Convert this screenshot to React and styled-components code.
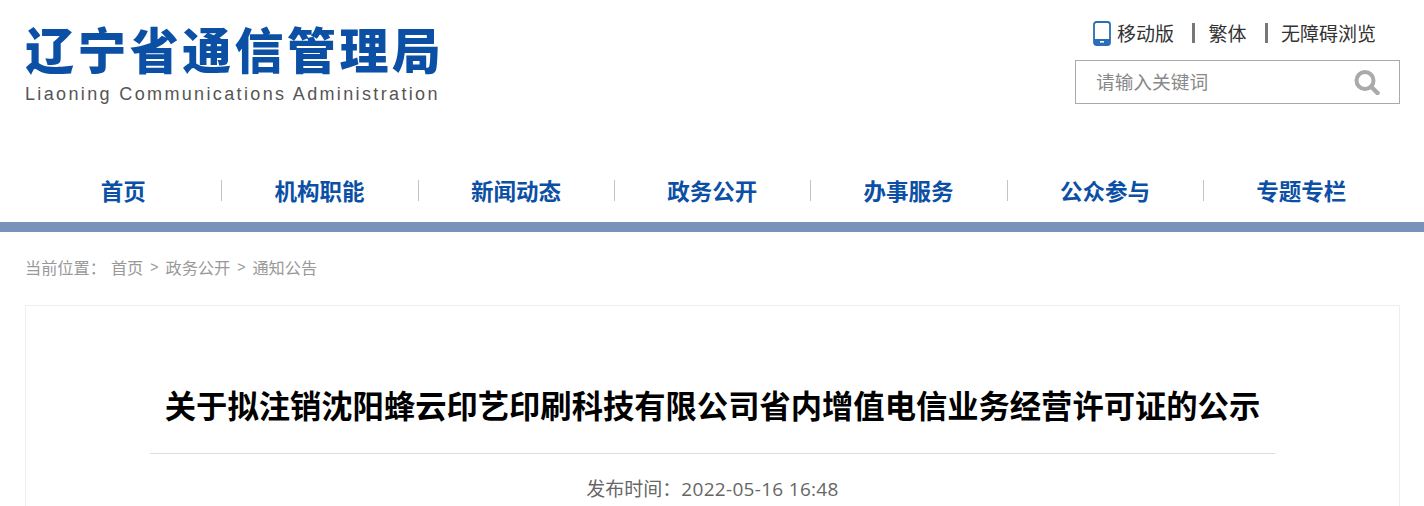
import React from 'react';
import styled, { createGlobalStyle } from 'styled-components';

const cjk = '"Noto Sans CJK SC", "Noto Sans", sans-serif';

const GlobalStyle = createGlobalStyle`
  html, body {
    margin: 0;
    padding: 0;
    height: 100%;
    overflow: hidden;
    background: #fff;
    font-family: ${cjk};
  }
`;

const Header = styled.header`
  display: flex;
  justify-content: space-between;
  align-items: flex-start;
  height: 170px;
  padding: 0 24px 0 25px;
`;

const Logo = styled.div`
  display: flex;
  flex-direction: column;
  padding-top: 18px;
`;

const LogoTitle = styled.div`
  font-size: 49px;
  line-height: 60px;
  letter-spacing: 3.4px;
  font-weight: 900;
  color: #0b50a5;
  white-space: nowrap;
`;

const LogoSub = styled.div`
  margin-top: 6px;
  font-family: "Liberation Sans", Arial, sans-serif;
  font-size: 18px;
  line-height: 20px;
  letter-spacing: 2.36px;
  color: #555;
  white-space: nowrap;
`;

const Tools = styled.div`
  display: flex;
  flex-direction: column;
  align-items: flex-end;
  padding-top: 19px;
`;

const ToolLinks = styled.div`
  display: flex;
  align-items: center;
  height: 28px;
  padding-right: 24px;
`;

const ToolLink = styled.a`
  display: flex;
  align-items: center;
  gap: 6px;
  font-size: 19px;
  line-height: 28px;
  color: #333;
  white-space: nowrap;
`;

const ToolSep = styled.span`
  width: 3px;
  height: 20px;
  margin: 0 13px 0 18.5px;
  background: #777;
`;

const SearchBox = styled.div`
  display: flex;
  align-items: center;
  justify-content: space-between;
  box-sizing: border-box;
  width: 325px;
  height: 44px;
  margin-top: 13px;
  padding: 0 19px 0 20px;
  border: 1px solid #aaa;
`;

const SearchInput = styled.input`
  flex: 1;
  min-width: 0;
  border: 0;
  outline: 0;
  padding: 0 0 3px;
  background: transparent;
  font-family: ${cjk};
  font-size: 18.7px;
  color: #333;

  &::placeholder {
    color: #888;
    opacity: 1;
  }
`;

const Nav = styled.nav`
  display: grid;
  grid-template-columns: repeat(7, 1fr);
  align-items: center;
  box-sizing: border-box;
  height: 52px;
  margin: 0 23.5px 0 26px;
  padding-bottom: 12px;
`;

const NavItem = styled.a`
  display: block;
  box-sizing: border-box;
  height: 21px;
  padding-right: 1px;
  line-height: 21px;
  text-align: center;
  font-size: 22.5px;
  font-weight: 700;
  color: #0b50a5;
  white-space: nowrap;
  border-right: 1px solid ${({ $last }) => ($last ? 'transparent' : '#c4c4c4')};
`;

const Bar = styled.div`
  height: 10px;
  background: #7992bc;
`;

const Crumbs = styled.div`
  display: flex;
  align-items: center;
  box-sizing: border-box;
  height: 73px;
  padding: 0 0 4px 25px;
  font-size: 16.2px;
  color: #999;
  white-space: nowrap;
`;

const CrumbLabel = styled.span`
  margin-right: 5px;
`;

const CrumbArrow = styled.span`
  margin: 0 7px;
  font-family: "Liberation Sans", Arial, sans-serif;
  font-size: 14px;
`;

const Article = styled.article`
  box-sizing: border-box;
  height: 600px;
  margin: 0 24px 0 25px;
  padding: 0 124px;
  border: 1px solid #eee;
`;

const Title = styled.h1`
  margin: 0;
  padding: 72px 0 21px;
  border-bottom: 1px solid #ddd;
  text-align: center;
  font-size: 31.3px;
  line-height: 54px;
  font-weight: 700;
  color: #000;
  white-space: nowrap;
`;

const Meta = styled.div`
  margin-top: 20px;
  text-align: center;
  font-size: 19px;
  line-height: 28px;
  color: #666;
`;

const MetaDate = styled.span`
  font-family: "Open Sans", ${cjk};
  letter-spacing: 0.3px;
`;

const PhoneIcon = () => (
  <svg width="18" height="25" viewBox="0 0 18 25" aria-hidden="true">
    <rect x="1" y="1" width="16" height="23" rx="2.5" fill="#fff" stroke="#2a6db8" strokeWidth="1.800" />
    <path d="M1 18h16v3.5a2.5 2.5 0 0 1-2.5 2.5h-11A2.5 2.5 0 0 1 1 21.500z" fill="#2a6db8" />
    <rect x="7" y="20" width="4" height="1.600" fill="#fff" />
  </svg>
);

const SearchIcon = () => (
  <svg width="26" height="25" viewBox="0 0 26 25" aria-hidden="true">
    <circle cx="11" cy="10.500" r="8.500" fill="none" stroke="#aaa" strokeWidth="4" />
    <path d="M17.500 17l6 6" stroke="#aaa" strokeWidth="4.500" strokeLinecap="round" />
  </svg>
);

const navItems = ['首页', '机构职能', '新闻动态', '政务公开', '办事服务', '公众参与', '专题专栏'];

const App = () => (
  <>
    <GlobalStyle />
    <Header>
      <Logo>
        <LogoTitle>辽宁省通信管理局</LogoTitle>
        <LogoSub>Liaoning Communications Administration</LogoSub>
      </Logo>
      <Tools>
        <ToolLinks>
          <ToolLink><PhoneIcon />移动版</ToolLink>
          <ToolSep />
          <ToolLink>繁体</ToolLink>
          <ToolSep />
          <ToolLink>无障碍浏览</ToolLink>
        </ToolLinks>
        <SearchBox>
          <SearchInput placeholder="请输入关键词" />
          <SearchIcon />
        </SearchBox>
      </Tools>
    </Header>
    <Nav>
      {navItems.map((item, i) => (
        <NavItem key={item} $last={i === navItems.length - 1}>{item}</NavItem>
      ))}
    </Nav>
    <Bar />
    <Crumbs>
      <CrumbLabel>当前位置：</CrumbLabel>
      首页
      <CrumbArrow>&gt;</CrumbArrow>
      政务公开
      <CrumbArrow>&gt;</CrumbArrow>
      通知公告
    </Crumbs>
    <Article>
      <Title>关于拟注销沈阳蜂云印艺印刷科技有限公司省内增值电信业务经营许可证的公示</Title>
      <Meta>发布时间：<MetaDate>2022-05-16 16:48</MetaDate></Meta>
    </Article>
  </>
);

export default App;
